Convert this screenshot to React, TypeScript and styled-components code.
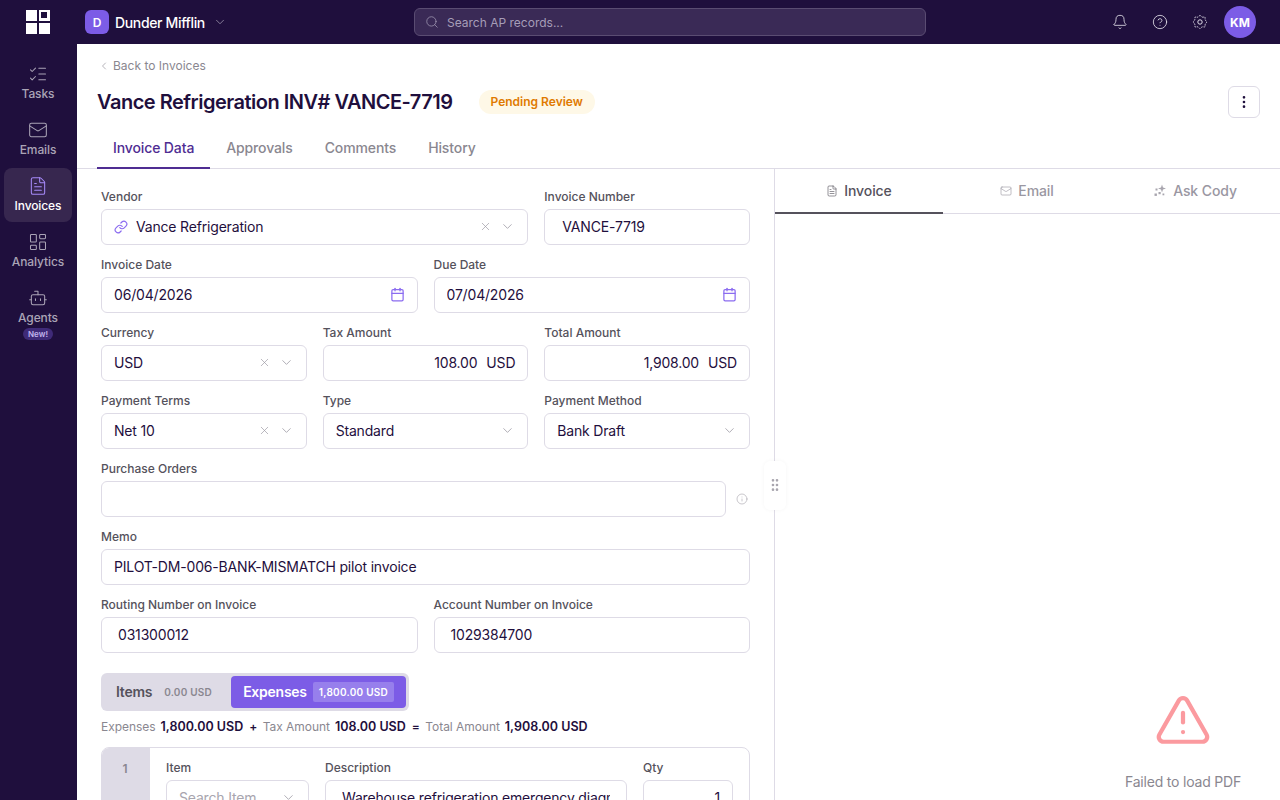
import React from "react";
import styled, { createGlobalStyle } from "styled-components";
import {
  Bell, Bot, Calendar, ChevronDown, ChevronLeft, CircleHelp, EllipsisVertical, FileText,
  GripVertical, Info, LayoutDashboard, Link, ListChecks, Mail, Search, TriangleAlert, X,
} from "lucide-react";

const Global = createGlobalStyle`
  * { box-sizing: border-box; }
  html, body { margin: 0; padding: 0; height: 100%; background: #fff; }
  body { font-family: Inter, "Noto Sans", sans-serif; color: #1f0f3d; overflow: hidden; -webkit-font-smoothing: antialiased; }
`;

const Page = styled.div`display: flex; flex-direction: column; height: 800px; overflow: hidden;`;
const TopBar = styled.header`
  flex: 0 0 44px; display: flex; align-items: center; background: #1f0f3d; position: relative;
`;
const LogoCell = styled.div`width: 77px; padding-right: 1px; display: flex; justify-content: center; align-items: center;`;
const Workspace = styled.div`display: flex; align-items: center; gap: 6px; margin-left: 8px; width: 329px;`;
const WorkspaceBadge = styled.div`
  width: 24px; height: 24px; border-radius: 6px; background: #7c5ce6; color: #fff;
  font-size: 12px; font-weight: 600; display: flex; align-items: center; justify-content: center;
`;
const WorkspaceName = styled.span`color: #fff; font-size: 14px; font-weight: 500; letter-spacing: -0.35px; margin-right: 2px;`;
const SearchBox = styled.div`
  width: 512px; height: 28px; border-radius: 6px; background: #3a2a56; border: 1px solid #5a4c72;
  display: flex; align-items: center; gap: 8px; padding-left: 10px; color: #a69db8; font-size: 12px;
`;
const TopActions = styled.div`margin-left: auto; display: flex; align-items: center; gap: 24px; padding-right: 24px;`;
const Avatar = styled.div`
  width: 32px; height: 32px; border-radius: 50%; background: #7c5ce6; color: #fff; margin-left: -8px;
  display: flex; align-items: center; justify-content: center; font-size: 12px; font-weight: 700;
`;

const Body = styled.div`flex: 1; display: flex; min-height: 0;`;
const Sidebar = styled.nav`
  flex: 0 0 77px; background: #1f0f3d; padding: 12px 5px 0 4px; display: flex; flex-direction: column; gap: 2px;
`;
const NavItem = styled.div<{ $active?: boolean }>`
  height: 54px; border-radius: 8px; display: flex; flex-direction: column; align-items: center; padding-top: 8px;
  background: ${p => (p.$active ? "#37274f" : "transparent")};
  color: ${p => (p.$active ? "#fff" : "#aaa4b6")};
  font-size: 12px; font-weight: 500; line-height: 16px; gap: 2px; letter-spacing: -0.1px;
  svg { flex: none; color: ${p => (p.$active ? "#a78bfa" : "#aaa4b6")}; }
`;
const NewTag = styled.span`
  flex: none; margin-top: 0; height: 12px; padding: 0 5px; border-radius: 6px; background: #3f2a78; color: #c3b5ee;
  font-size: 8px; line-height: 12px; font-weight: 600; letter-spacing: 0;
`;

const Main = styled.main`flex: 1; min-width: 0; display: flex; flex-direction: column; background: #fff;`;
const Header = styled.div`flex: 0 0 125px; padding: 0 20px; border-bottom: 1px solid #dedbe6; display: flex; flex-direction: column;`;
const Back = styled.div`
  height: 43px; display: flex; align-items: center; gap: 3px; padding-left: 1px; color: #8a8790; font-size: 12px;
`;
const TitleRow = styled.div`height: 28px; margin-top: 1px; display: flex; align-items: center;`;
const Title = styled.h1`margin: 0; font-size: 20px; font-weight: 600; line-height: 28px; color: #1f0f3d; letter-spacing: -0.5px;`;
const Status = styled.span`
  margin-left: 26px; height: 24px; padding: 0 12px; border-radius: 12px; background: #fef8e7; color: #e07a00;
  font-size: 12px; font-weight: 600; display: flex; align-items: center; padding-bottom: 1px;
`;
const MoreButton = styled.button`
  margin-left: auto; width: 32px; height: 32px; border-radius: 6px; border: 1px solid #dedbe6; background: #fff; color: #1f0f3d;
  display: flex; align-items: center; justify-content: center; padding: 0;
`;
const Tabs = styled.div`margin-top: auto; display: flex; height: 38px;`;
const Tab = styled.div<{ $active?: boolean }>`
  padding: 0 16px 2px; display: flex; align-items: center; font-size: 14px; font-weight: 500; letter-spacing: -0.12px;
  color: ${p => (p.$active ? "#4f2d92" : "#8a8790")};
  border-bottom: 2px solid ${p => (p.$active ? "#4f2d92" : "transparent")};
  margin-bottom: -1px;
`;

const Split = styled.div`flex: 1; display: flex; min-height: 0; position: relative;`;
const FormPane = styled.section`flex: 0 0 698px; padding: 20px 24px 0; border-right: 1px solid #dedbe6; overflow: hidden;`;
const Row = styled.div<{ $cols: string }>`
  display: grid; grid-template-columns: ${p => p.$cols}; column-gap: 16px; margin-bottom: 12px;
`;
const Field = styled.div<{ $span?: number }>`min-width: 0; ${p => (p.$span ? `grid-column: span ${p.$span};` : "")}`;
const Label = styled.div`height: 16px; margin-bottom: 4px; font-size: 12px; line-height: 16px; font-weight: 500; color: #55525c;`;
const Control = styled.div<{ $pad?: number; $padEnd?: number; $align?: string }>`
  height: 36px; border: 1px solid #dedbe6; border-radius: 6px; background: #fff; display: flex; align-items: center;
  padding: 0 ${p => p.$padEnd ?? 12}px 1px ${p => p.$pad ?? 12}px; font-size: 14px; letter-spacing: -0.18px; color: #1f0f3d;
  justify-content: ${p => p.$align ?? "flex-start"}; white-space: nowrap; overflow: hidden;
`;
const ControlText = styled.span`flex: 1; min-width: 0; overflow: hidden;`;
const Adorn = styled.span<{ $gap: number }>`display: inline-flex; color: #9a97a2; margin-left: ${p => p.$gap}px;`;
const Unit = styled.span`margin-left: 9px;`;
const InputLine = styled.div`display: flex; align-items: center; gap: 8px;`;
const InfoSlot = styled.div`flex: 0 0 16px; display: flex; color: #a8a5ae;`;
const Grow = styled.div`flex: 1; min-width: 0;`;

const Toggle = styled.div`
  margin-top: 20px; width: 308px; height: 38px; border-radius: 6px; background: #dedbe6; padding: 3px 3px 3px 0; display: flex;
`;
const ToggleItem = styled.div<{ $active?: boolean }>`
  display: flex; align-items: center; border-radius: 4px; padding: 0 12px 1px ${p => (p.$active ? 12 : 15)}px;
  flex: ${p => (p.$active ? "0 0 174px" : "1")};
  background: ${p => (p.$active ? "#7c5ce6" : "transparent")};
  color: ${p => (p.$active ? "#fff" : "#55525c")};
  font-size: 14px; font-weight: 600; letter-spacing: -0.25px;
`;
const ToggleAmount = styled.span<{ $active?: boolean }>`
  font-size: 10px; font-weight: 600; height: 20px; display: flex; align-items: center; border-radius: 2px; white-space: nowrap;
  letter-spacing: ${p => (p.$active ? "0.25px" : "0.2px")};
  margin-left: ${p => (p.$active ? 6 : 12)}px; padding: 0 ${p => (p.$active ? 6 : 0)}px;
  background: ${p => (p.$active ? "#977fec" : "transparent")};
  color: ${p => (p.$active ? "#fff" : "#8a8790")};
`;
const Totals = styled.div`
  margin-top: 8px; height: 16px; padding-bottom: 1px; display: flex; align-items: center; font-size: 12px; letter-spacing: -0.05px; color: #8a8790; white-space: nowrap;
`;
const Strong = styled.strong`font-size: 12.5px; letter-spacing: 0; font-weight: 600; color: #1f0f3d; margin-left: 5px; margin-right: 6px;`;
const Operator = styled.strong`font-weight: 600; color: #1f0f3d; margin-right: 5.5px;`;

const LineCard = styled.div`
  margin-top: 12px; height: 200px; border: 1px solid #dedbe6; border-radius: 8px; display: flex; overflow: hidden;
`;
const LineNumber = styled.div`
  flex: 0 0 48px; background: #dedbe6; color: #8a8790; font-size: 12px; font-weight: 600; text-align: center; padding: 13px 2px 0 0;
`;
const LineFields = styled.div`
  flex: 1; min-width: 0; padding: 12px 16px 0; display: grid; grid-template-columns: 143px 302px 90px; column-gap: 16px; align-items: start;
`;
const Placeholder = styled.span`flex: 1; color: #a8a5ae;`;

const PdfPane = styled.section`flex: 1; min-width: 0; display: flex; flex-direction: column;`;
const PdfTabs = styled.div`flex: 0 0 45px; display: grid; grid-template-columns: 168px 168px 1fr; border-bottom: 1px solid #dedbe6;`;
const PdfTab = styled.div<{ $active?: boolean }>`
  display: flex; align-items: center; justify-content: center; gap: 6px; font-size: 14px; font-weight: 500; margin-bottom: -1px; letter-spacing: -0.1px;
  color: ${p => (p.$active ? "#55525c" : "#9a97a2")};
  border-bottom: 2px solid ${p => (p.$active ? "#55525c" : "transparent")};
`;
const PdfBody = styled.div`flex: 1; display: flex; flex-direction: column; align-items: flex-end; justify-content: flex-end; padding: 0 39px 9px 0;`;
const Failed = styled.div`display: flex; flex-direction: column; align-items: center; gap: 24px; color: #8a8790; font-size: 14px; line-height: 18px; letter-spacing: -0.2px;`;
const FailedIcon = styled.span`display: flex; color: #fb9a9f;`;
const Handle = styled.div`
  position: absolute; left: 687px; top: 292px; width: 22px; height: 49px; border-radius: 6px; background: #fff; padding-bottom: 2px;
  display: flex; align-items: center; justify-content: center; color: #a8a5ae; box-shadow: 0 0 4px rgba(31,15,61,.04);
`;

const Logo = () => (
  <svg width="24" height="24" viewBox="0 0 24 24" fill="#fff">
    <rect x="0" y="0" width="11" height="11" />
    <rect x="0" y="13" width="11" height="11" />
    <rect x="13" y="13" width="11" height="11" />
    <path fillRule="evenodd" d="M13 0h11v11H13zM15 2v6h6V2z" />
  </svg>
);
const GearFlower = () => (
  <svg width="16" height="16" viewBox="0 0 16 16" fill="none" stroke="#b3adc0" strokeWidth="1" strokeDasharray="2 .8">
    <path d="M8 1.2 10 3.2 13 3 13.2 6 15 8 13.2 10 13 13 10 12.8 8 14.8 6 12.8 3 13 2.8 10 1 8 2.8 6 3 3 6 3.2Z" />
    <circle cx="8" cy="8" r="2.2" strokeDasharray="none" stroke="#e0dce8" />
  </svg>
);
const Cody = () => (
  <svg width="13" height="13" viewBox="0 0 13 13" fill="#a8a5ae">
    <path d="M8 0.5 9 3.5 12 4.5 9 5.5 8 8.5 7 5.5 4 4.5 7 3.5Z" />
    <rect x="1.5" y="4.5" width="2" height="2" />
    <rect x="4.5" y="8" width="2.2" height="2.2" />
    <rect x="0.5" y="9.5" width="2.4" height="2.4" />
    <rect x="8.5" y="9.5" width="1.8" height="1.8" />
  </svg>
);

const Chevron = () => <Adorn $gap={8}><ChevronDown size={15} strokeWidth={1.25} /></Adorn>;
const Clear = () => <Adorn $gap={6}><X size={13} strokeWidth={1.25} /></Adorn>;
const Cal = () => <Calendar size={15} strokeWidth={2} color="#8b6cf0" />;

type Nav = { label: string; icon: React.ReactNode; active?: boolean; tag?: string };
const navItems: Nav[] = [
  { label: "Tasks", icon: <ListChecks size={20} strokeWidth={1.25} /> },
  { label: "Emails", icon: <Mail size={20} strokeWidth={1.25} /> },
  { label: "Invoices", icon: <FileText size={20} strokeWidth={1.25} />, active: true },
  { label: "Analytics", icon: <LayoutDashboard size={20} strokeWidth={1.25} /> },
  { label: "Agents", icon: <Bot size={20} strokeWidth={1.25} />, tag: "New!" },
];

export default function App() {
  return (
    <Page>
      <Global />
      <TopBar>
        <LogoCell><Logo /></LogoCell>
        <Workspace>
          <WorkspaceBadge>D</WorkspaceBadge>
          <WorkspaceName>Dunder Mifflin</WorkspaceName>
          <ChevronDown size={14} strokeWidth={1.25} color="#a9a3b8" />
        </Workspace>
        <SearchBox><Search size={14} strokeWidth={1.25} color="#a69db8" />Search AP records...</SearchBox>
        <TopActions>
          <Bell size={16} strokeWidth={1.25} color="#e5e2ea" />
          <CircleHelp size={16} strokeWidth={1.25} color="#e5e2ea" />
          <GearFlower />
          <Avatar>KM</Avatar>
        </TopActions>
      </TopBar>
      <Body>
        <Sidebar>
          {navItems.map(n => (
            <NavItem key={n.label} $active={n.active}>
              {n.icon}
              {n.label}
              {n.tag && <NewTag>{n.tag}</NewTag>}
            </NavItem>
          ))}
        </Sidebar>
        <Main>
          <Header>
            <Back><ChevronLeft size={12} strokeWidth={1.25} />Back to Invoices</Back>
            <TitleRow>
              <Title>Vance Refrigeration INV# VANCE-7719</Title>
              <Status>Pending Review</Status>
              <MoreButton aria-label="More"><EllipsisVertical size={16} strokeWidth={2} /></MoreButton>
            </TitleRow>
            <Tabs>
              <Tab $active>Invoice Data</Tab>
              <Tab>Approvals</Tab>
              <Tab>Comments</Tab>
              <Tab>History</Tab>
            </Tabs>
          </Header>
          <Split>
            <FormPane>
              <Row $cols="1fr 1fr 1fr">
                <Field $span={2}>
                  <Label>Vendor</Label>
                  <Control>
                    <Link size={14} strokeWidth={2} color="#8b6cf0" style={{ marginRight: 8 }} />
                    <ControlText>Vance Refrigeration</ControlText>
                    <Clear /><Chevron />
                  </Control>
                </Field>
                <Field><Label>Invoice Number</Label><Control $pad={17}>VANCE-7719</Control></Field>
              </Row>
              <Row $cols="1fr 1fr">
                <Field><Label>Invoice Date</Label><Control><ControlText>06/04/2026</ControlText><Cal /></Control></Field>
                <Field><Label>Due Date</Label><Control><ControlText>07/04/2026</ControlText><Cal /></Control></Field>
              </Row>
              <Row $cols="1fr 1fr 1fr">
                <Field><Label>Currency</Label><Control><ControlText>USD</ControlText><Clear /><Chevron /></Control></Field>
                <Field><Label>Tax Amount</Label><Control $align="flex-end">108.00<Unit>USD</Unit></Control></Field>
                <Field><Label>Total Amount</Label><Control $align="flex-end">1,908.00<Unit>USD</Unit></Control></Field>
              </Row>
              <Row $cols="1fr 1fr 1fr">
                <Field><Label>Payment Terms</Label><Control><ControlText>Net 10</ControlText><Clear /><Chevron /></Control></Field>
                <Field><Label>Type</Label><Control><ControlText>Standard</ControlText><Chevron /></Control></Field>
                <Field><Label>Payment Method</Label><Control><ControlText>Bank Draft</ControlText><Chevron /></Control></Field>
              </Row>
              <Row $cols="1fr">
                <Field>
                  <Label>Purchase Orders</Label>
                  <InputLine>
                    <Grow><Control /></Grow>
                    <InfoSlot><Info size={12} strokeWidth={1.25} style={{ margin: "2px" }} /></InfoSlot>
                  </InputLine>
                </Field>
              </Row>
              <Row $cols="1fr">
                <Field><Label>Memo</Label><Control>PILOT-DM-006-BANK-MISMATCH pilot invoice</Control></Field>
              </Row>
              <Row $cols="1fr 1fr">
                <Field><Label>Routing Number on Invoice</Label><Control $pad={16}>031300012</Control></Field>
                <Field><Label>Account Number on Invoice</Label><Control $pad={16}>1029384700</Control></Field>
              </Row>
              <Toggle>
                <ToggleItem>Items<ToggleAmount>0.00 USD</ToggleAmount></ToggleItem>
                <ToggleItem $active>Expenses<ToggleAmount $active>1,800.00 USD</ToggleAmount></ToggleItem>
              </Toggle>
              <Totals>
                Expenses<Strong>1,800.00 USD</Strong><Operator>+</Operator>Tax Amount<Strong>108.00 USD</Strong><Operator>=</Operator>Total Amount<Strong>1,908.00 USD</Strong>
              </Totals>
              <LineCard>
                <LineNumber>1</LineNumber>
                <LineFields>
                  <Field><Label>Item</Label><Control><Placeholder>Search Item</Placeholder><Chevron /></Control></Field>
                  <Field><Label>Description</Label><Control $pad={16} $padEnd={16}><ControlText>Warehouse refrigeration emergency diagnostic</ControlText></Control></Field>
                  <Field><Label>Qty</Label><Control $align="flex-end">1</Control></Field>
                </LineFields>
              </LineCard>
            </FormPane>
            <PdfPane>
              <PdfTabs>
                <PdfTab $active><FileText size={12} strokeWidth={1.25} />Invoice</PdfTab>
                <PdfTab><Mail size={12} strokeWidth={1.25} />Email</PdfTab>
                <PdfTab><Cody />Ask Cody</PdfTab>
              </PdfTabs>
              <PdfBody>
                <Failed>
                  <FailedIcon><TriangleAlert size={58} strokeWidth={1.75} /></FailedIcon>
                  Failed to load PDF
                </Failed>
              </PdfBody>
            </PdfPane>
            <Handle><GripVertical size={16} strokeWidth={2} /></Handle>
          </Split>
        </Main>
      </Body>
    </Page>
  );
}
